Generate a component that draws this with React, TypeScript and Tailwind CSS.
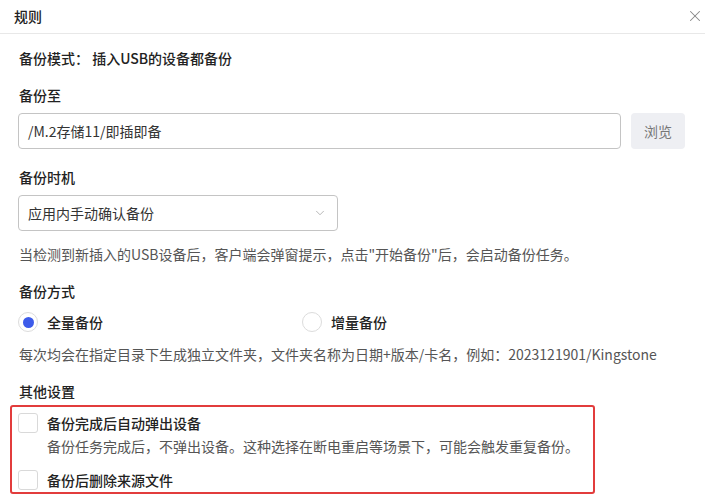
import { ChevronDown, X } from "lucide-react";

const font = { fontFamily: '"Noto Sans CJK SC", "Noto Sans", sans-serif' };

const Checkbox = () => (
  <span className="h-[20px] w-[20px] shrink-0 rounded-[3px] border border-[#d9d9d9] bg-white" />
);

const Radio = ({ checked }: { checked?: boolean }) => (
  <span className="flex h-[20px] w-[20px] shrink-0 items-center justify-center rounded-full border border-[#dcdcdc] bg-white">
    {checked && <span className="h-[11px] w-[11px] rounded-full bg-[#3d5bea]" />}
  </span>
);

export default function App() {
  return (
    <div className="h-[504px] w-[705px] bg-white text-[14px] leading-[20px] text-[#222]" style={font}>
      <header className="flex h-[34px] items-center justify-between border-b border-[#e8e8e8] pb-[2px] pl-[14px] pr-[1px]">
        <span className="text-[14px] font-medium">规则</span>
        <X size={18} strokeWidth={1.4} className="text-[#888]" />
      </header>

      <div className="px-[18px]">
        <p className="mt-[14px] pl-px font-medium">备份模式： 插入USB的设备都备份</p>

        <p className="mt-[17px] pl-px font-medium">备份至</p>
        <div className="mt-[8px] flex gap-[10px]">
          <div className="flex h-[36px] w-[603px] items-center rounded-[4px] border border-[#c4c4c4] px-[9px] text-[#333]">
            /M.2存储11/即插即备
          </div>
          <button className="h-[36px] w-[54px] rounded-[4px] bg-[#eeeff3] text-[#777]">浏览</button>
        </div>

        <p className="mt-[18px] pl-px font-medium">备份时机</p>
        <div className="mt-[8px] flex h-[36px] w-[320px] items-center justify-between rounded-[4px] border border-[#c4c4c4] pl-[9px] pr-[10px] text-[#333]">
          <span>应用内手动确认备份</span>
          <ChevronDown size={14} strokeWidth={1.2} className="text-[#999]" />
        </div>

        <p className="mt-[13px] pl-px text-[#555]">
          当检测到新插入的USB设备后，客户端会弹窗提示，点击"开始备份"后，会启动备份任务。
        </p>

        <p className="mt-[17px] pl-px font-medium">备份方式</p>
        <div className="mt-[11px] flex items-center">
          <div className="flex w-[284px] items-center gap-[9px]">
            <Radio checked />
            <span className="font-medium">全量备份</span>
          </div>
          <div className="flex items-center gap-[9px]">
            <Radio />
            <span className="font-medium">增量备份</span>
          </div>
        </div>

        <p className="mt-[12px] pl-px text-[#555]">
          每次均会在指定目录下生成独立文件夹，文件夹名称为日期+版本/卡名，例如：2023121901/Kingstone
        </p>

        <p className="mt-[17px] pl-px font-medium">其他设置</p>
        <div className="-ml-[8px] mt-[4px] w-[585px] rounded-[3px] border-2 border-[#e23c3c] pb-[2px] pl-[6px] pt-[6px]">
          <div className="flex items-center gap-[9px]">
            <Checkbox />
            <span className="font-medium">备份完成后自动弹出设备</span>
          </div>
          <p className="mt-[3px] pl-[29px] text-[#555]">
            备份任务完成后，不弹出设备。这种选择在断电重启等场景下，可能会触发重复备份。
          </p>
          <div className="mt-[14px] flex items-center gap-[9px]">
            <Checkbox />
            <span className="font-medium">备份后删除来源文件</span>
          </div>
        </div>
      </div>
    </div>
  );
}
